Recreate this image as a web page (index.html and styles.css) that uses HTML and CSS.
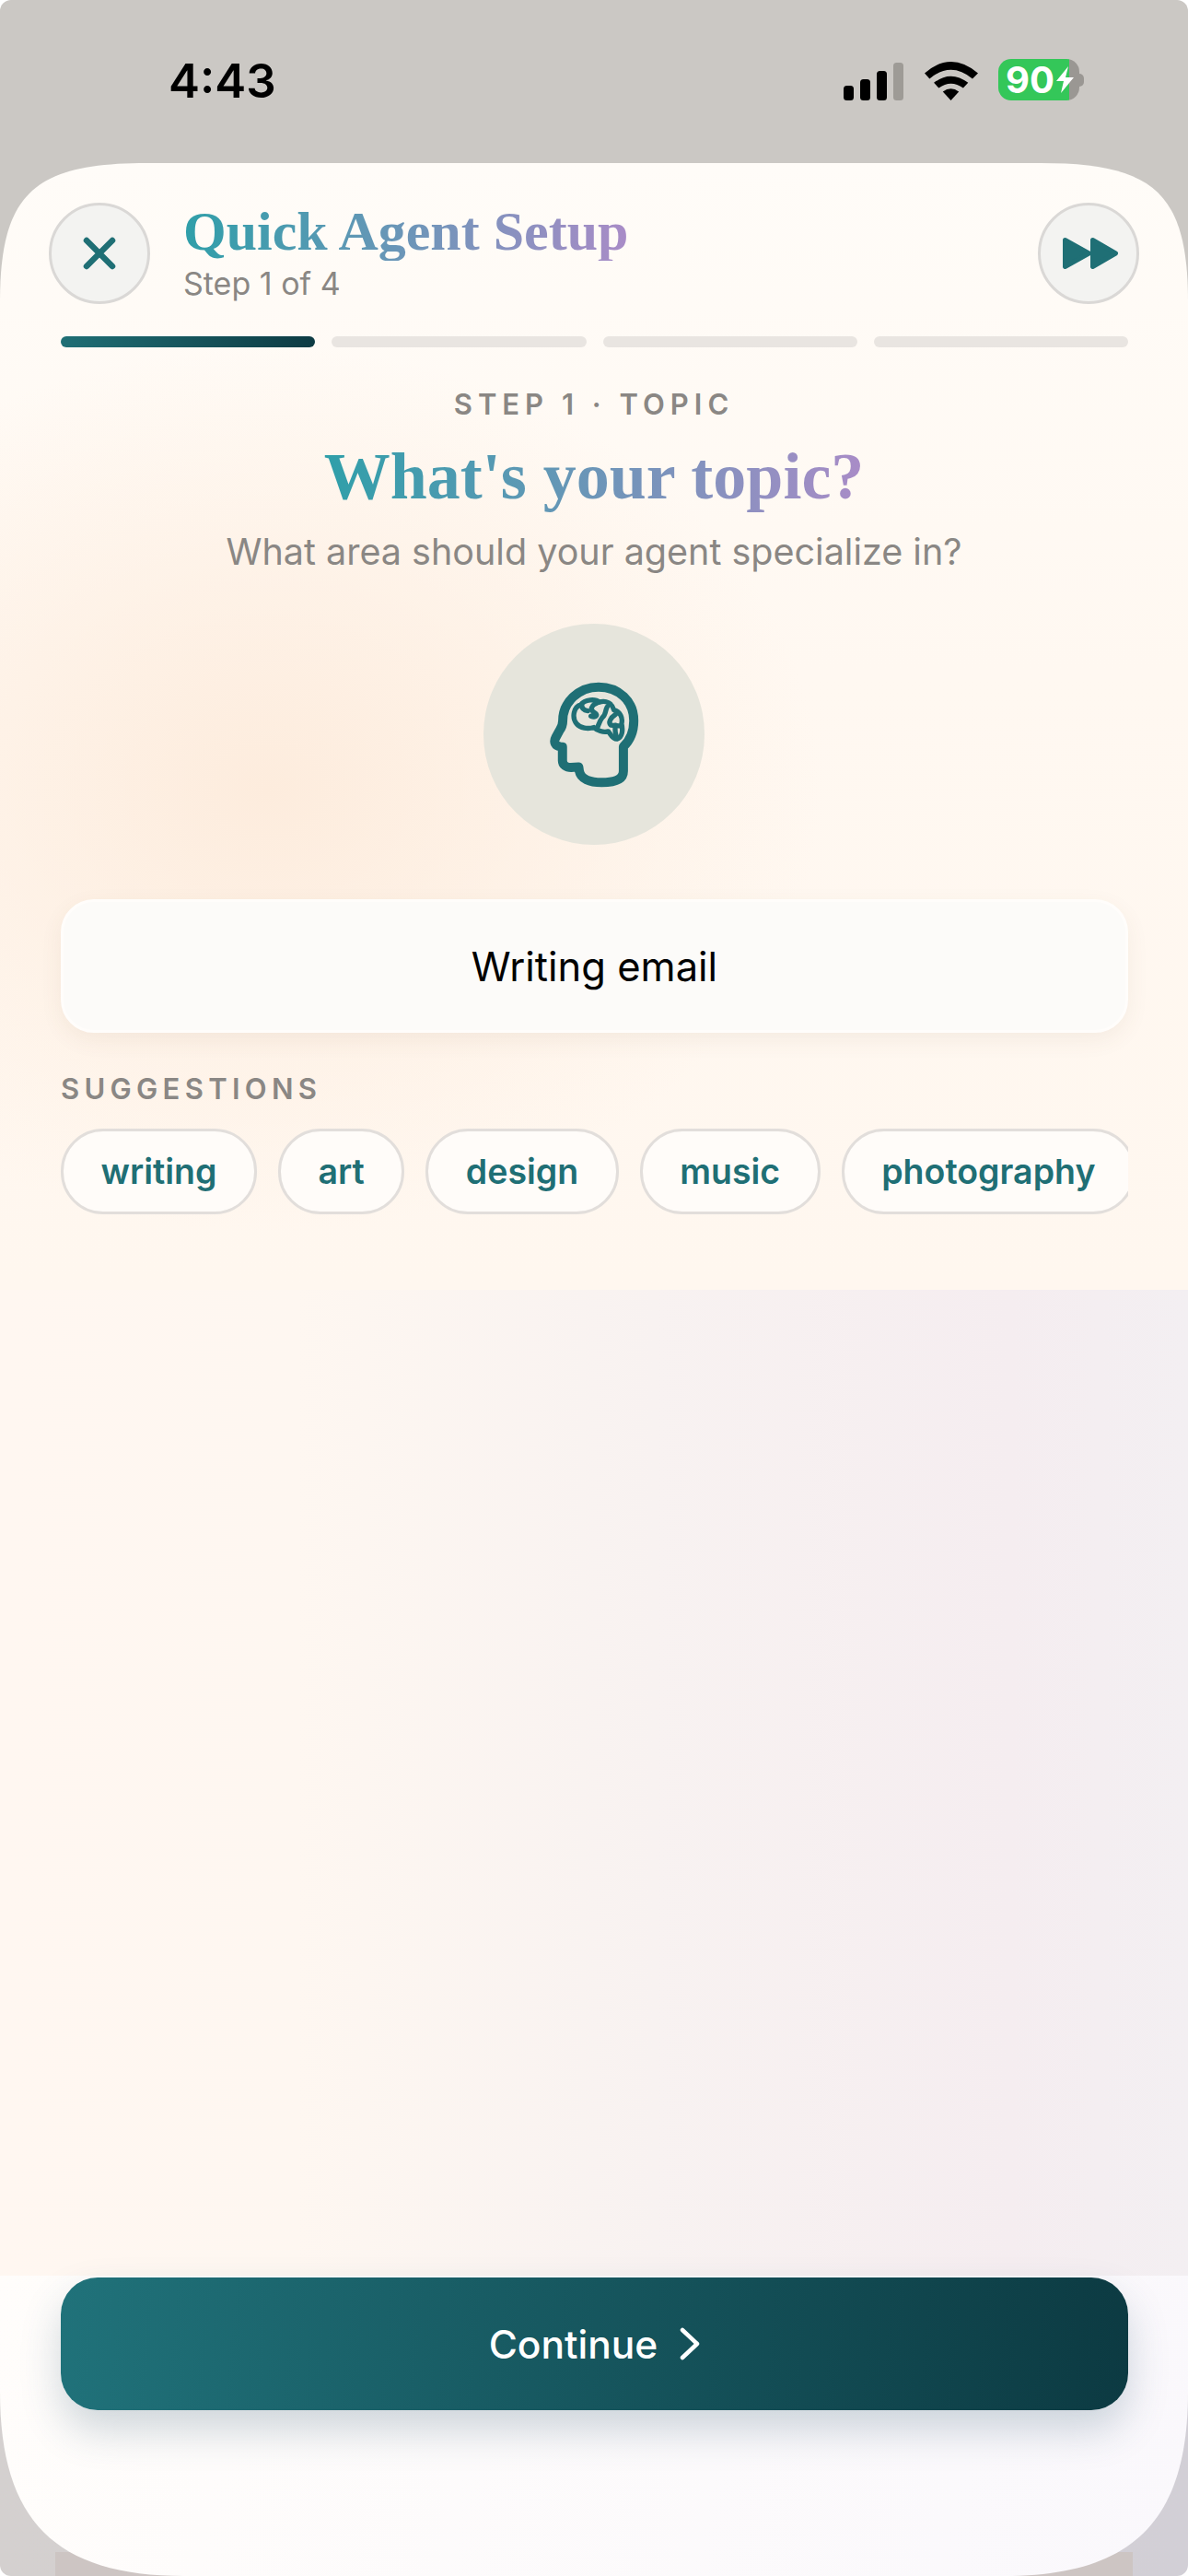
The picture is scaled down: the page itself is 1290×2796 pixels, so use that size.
FILE: index.html
```html
<!DOCTYPE html>
<html lang="en">
<head>
  <meta charset="UTF-8">
  <meta name="viewport" content="width=device-width, initial-scale=1.0">
  <title>Quick Agent Setup</title>
  <link rel="stylesheet" href="styles.css">
</head>
<body>
  <div class="screen">
    <div class="status">
      <span class="time">4:43</span>
      <div class="status-icons">
        <svg class="signal" width="65" height="41" viewBox="0 0 65 41">
          <rect x="0" y="25" width="11" height="16" rx="3.5" fill="#000"/>
          <rect x="18" y="18" width="11" height="23" rx="3.5" fill="#000"/>
          <rect x="36" y="9" width="11" height="32" rx="3.5" fill="#000"/>
          <rect x="54" y="0" width="11" height="41" rx="3.5" fill="#9e9b96"/>
        </svg>
        <svg class="wifi" width="58" height="42" viewBox="372 75 173 125">
          <path d="M372 112 Q457 38 545 112 L527 130 Q457 72 388 130 Z" fill="#000"/>
          <path d="M402 143 Q457 100 513 143 L497 160 Q457 132 418 160 Z" fill="#000"/>
          <path d="M431 172 Q457 152 483 172 L457 200 Z" fill="#000"/>
        </svg>
        <div class="battery">
          <span class="battery-level">90</span>
          <svg class="bolt" width="19" height="29" viewBox="0 0 19 29">
            <path d="M13 0 L0 16 H8 L5 29 L19 12 H10 Z" fill="#fff"/>
          </svg>
        </div>
        <span class="battery-nub"></span>
      </div>
    </div>

    <div class="card">
      <div class="card-top">
        <div class="header">
          <button class="round-btn" type="button">
            <svg width="44" height="44" viewBox="0 0 44 44">
              <path d="M8 8 L36 36 M36 8 L8 36" stroke="#1f6f75" stroke-width="6.5" stroke-linecap="round" fill="none"/>
            </svg>
          </button>
          <div class="header-text">
            <div class="header-title">Quick Agent Setup</div>
            <div class="header-sub">Step 1 of 4</div>
          </div>
          <button class="round-btn" type="button">
            <svg width="66" height="36" viewBox="0 0 66 36">
              <path d="M7.5 3.5 L33.5 18 L7.5 32.5 Z" fill="#1f6f75" stroke="#1f6f75" stroke-width="5" stroke-linejoin="round"/>
              <path d="M37.5 3.5 L62.5 18 L37.5 32.5 Z" fill="#1f6f75" stroke="#1f6f75" stroke-width="5" stroke-linejoin="round"/>
            </svg>
          </button>
        </div>

        <div class="progress">
          <span class="seg seg-on"></span>
          <span class="seg"></span>
          <span class="seg"></span>
          <span class="seg"></span>
        </div>

        <div class="step-label">STEP 1 · TOPIC</div>
        <h1 class="step-title"><span>What's your topic?</span></h1>
        <p class="step-sub">What area should your agent specialize in?</p>

        <div class="topic-icon">
          <svg width="100" height="117" viewBox="285 240 300 352">
            <path d="M531 455 C555 432 565 402 565 370 C565 305 515 260 450 260 C385 260 333 310 333 370 C333 385 330 392 322 403 L310 425 C302 440 308 452 325 455 L332 456 L332 500 C332 515 345 523 360 523 L385 521 L387 535 C392 560 420 572 460 572 C505 572 531 560 531 535 Z" fill="none" stroke="#1f6f75" stroke-width="30" stroke-linejoin="round"/>
            <g fill="none" stroke="#1f6f75" stroke-width="16" stroke-linecap="round" stroke-linejoin="round">
              <path d="M378 380 C362 360 368 325 392 318 C405 300 440 298 452 310 C475 302 495 315 500 335 C520 340 530 360 525 380 C530 400 528 425 510 430 C495 430 490 415 482 405 C465 410 445 402 435 392 C415 398 390 395 378 380 Z"/>
              <path d="M395 318 C395 328 400 336 415 338"/>
              <path d="M445 312 C425 320 420 335 438 345 C450 352 440 362 425 355"/>
              <path d="M478 325 C470 340 475 350 462 360 C452 372 450 385 445 395"/>
              <path d="M505 350 C490 360 480 375 490 385 L525 388"/>
              <path d="M505 385 C503 400 505 415 510 425"/>
            </g>
          </svg>
        </div>

        <div class="topic-input">Writing email</div>

        <div class="suggest-label">SUGGESTIONS</div>
        <div class="chips">
          <span class="chip">writing</span>
          <span class="chip">art</span>
          <span class="chip">design</span>
          <span class="chip">music</span>
          <span class="chip">photography</span>
        </div>
      </div>

      <div class="card-middle"></div>

      <div class="card-footer">
        <button class="continue-btn" type="button">
          Continue
          <svg width="22" height="36" viewBox="0 0 22 36">
            <path d="M3 3 L19 18 L3 33" fill="none" stroke="#fff" stroke-width="4.5" stroke-linecap="round" stroke-linejoin="round"/>
          </svg>
        </button>
      </div>
    </div>
  </div>
</body>
</html>
```
FILE: styles.css
```css
* {
  box-sizing: border-box;
}

body {
  margin: 0;
  padding: 0;
  background-color: #ffffff;
  font-family: 'Inter', 'Noto Sans', sans-serif;
}

.screen {
  width: 1290px;
  height: 2796px;
  overflow: hidden;
  border-radius: 12px;
  display: flex;
  flex-direction: column;
  background:
    linear-gradient(#cdc5c3, #cdc5c3) 60px 2770px / 1170px 26px no-repeat,
    linear-gradient(90deg, #d4d0cf, #d2cfd6) 0 2600px / 1290px 196px no-repeat,
    #cbc8c4;
}

.status {
  height: 177px;
  flex-shrink: 0;
  display: flex;
  justify-content: space-between;
  align-items: flex-start;
  padding: 64px 113px 0 183px;
}

.time {
  font-size: 51px;
  font-weight: 600;
  line-height: 48px;
  color: #000;
}

.status-icons {
  display: flex;
  align-items: center;
  height: 45px;
}

.signal {
  margin-top: 4px;
  margin-right: 23px;
}

.wifi {
  margin-top: 3px;
  margin-right: 22px;
}

.battery {
  width: 88px;
  height: 45px;
  border-radius: 14px;
  background: linear-gradient(90deg, #34c759 87.5%, #9a9793 87.5%);
  display: flex;
  align-items: center;
  padding-left: 8px;
  gap: 2px;
}

.battery-level {
  font-size: 40px;
  font-weight: 700;
  line-height: 45px;
  color: #fff;
}

.battery-nub {
  width: 5px;
  height: 14px;
  border-radius: 0 5px 5px 0;
  background-color: #9a9793;
}

.card {
  flex: 1;
  display: flex;
  flex-direction: column;
  overflow: hidden;
  clip-path: path("M0 150 C0 30 40 0 160 0 H1130 C1250 0 1290 30 1290 150 V2419 C1290 2559 1230 2619 1090 2619 H200 C60 2619 0 2559 0 2419 Z");
}

.card-top {
  height: 1223px;
  flex-shrink: 0;
  background:
    radial-gradient(ellipse 600px 480px at 290px 680px, #fdecdd, rgba(253, 236, 221, 0)),
    linear-gradient(180deg, #fffcf8, #fff8f1 45%, #fff7ef);
}

.header {
  display: flex;
  align-items: flex-start;
  padding: 43px 53px 0;
}

.round-btn {
  width: 110px;
  height: 110px;
  flex-shrink: 0;
  border: 3px solid #dad8d6;
  border-radius: 50%;
  background-color: #f3f3f1;
  padding: 0;
  display: flex;
  align-items: center;
  justify-content: center;
}

.header-text {
  flex: 1;
  margin-left: 36px;
}

.header-title,
.step-title span {
  font-family: 'Liberation Serif', serif;
  font-weight: 700;
  background: linear-gradient(90deg, #2f9fa9, #a98cc7);
  -webkit-background-clip: text;
  background-clip: text;
  color: transparent;
}

.header-title {
  display: inline-block;
  font-size: 60px;
  line-height: 64px;
  margin-top: -1px;
}

.header-sub {
  font-size: 34px;
  line-height: 40px;
  color: #8a8784;
  margin-top: 5px;
}

.progress {
  display: flex;
  gap: 18px;
  margin: 35px 65px 0 66px;
}

.seg {
  flex: 1;
  height: 12px;
  border-radius: 6px;
  background-color: #e9e5e1;
}

.seg-on {
  background: linear-gradient(90deg, #1f6f75, #0d3b43);
}

.step-label {
  margin-top: 42px;
  text-align: center;
  font-size: 31px;
  font-weight: 600;
  line-height: 40px;
  letter-spacing: 6px;
  color: #8a8784;
}

.step-title {
  margin: 14px 0 0;
  text-align: center;
  font-size: 72px;
  font-weight: 700;
  line-height: 84px;
}

.step-sub {
  margin: 15px 0 0;
  text-align: center;
  font-size: 39.5px;
  line-height: 50px;
  color: #8a8784;
}

.topic-icon {
  width: 240px;
  height: 240px;
  margin: 53px auto 0;
  border-radius: 50%;
  background-color: #e6e5dc;
  display: flex;
  align-items: center;
  justify-content: center;
}

.topic-input {
  height: 145px;
  margin: 59px 65px 0 66px;
  border: 3px solid #fffdfb;
  border-radius: 36px;
  background-color: #fcfbf9;
  box-shadow: 0 8px 24px rgba(120, 90, 60, 0.07);
  display: flex;
  align-items: center;
  justify-content: center;
  font-size: 43.5px;
  color: #000;
}

.suggest-label {
  margin: 44px 65px 0 66px;
  font-size: 31px;
  font-weight: 600;
  line-height: 34px;
  letter-spacing: 5.3px;
  color: #8a8784;
}

.chips {
  display: flex;
  gap: 23px;
  margin: 26px 65px 0 66px;
  overflow: hidden;
}

.chip {
  height: 93px;
  flex-shrink: 0;
  padding: 0 40.5px;
  border: 3px solid #e2dedb;
  border-radius: 46px;
  background-color: #fffcf9;
  display: flex;
  align-items: center;
  font-size: 37.5px;
  font-weight: 600;
  color: #1f6f75;
}

.card-middle {
  height: 1070px;
  flex-shrink: 0;
  background: linear-gradient(90deg, #fff7f1, #fef7f1 25%, #f8f2f1 55%, #f5edf0 85%, #f3eff2);
}

.card-footer {
  flex: 1;
  padding: 2px 65px 0 66px;
  background: linear-gradient(100deg, #fffdfb, #faf8fc);
}

.continue-btn {
  width: 100%;
  height: 144px;
  border: none;
  border-radius: 40px;
  background: linear-gradient(95deg, #20727a, #0c3a42);
  box-shadow: 0 22px 44px rgba(40, 80, 110, 0.22);
  display: flex;
  align-items: center;
  justify-content: center;
  gap: 24px;
  font-family: inherit;
  font-size: 42.5px;
  font-weight: 500;
  color: #fff;
}
```
